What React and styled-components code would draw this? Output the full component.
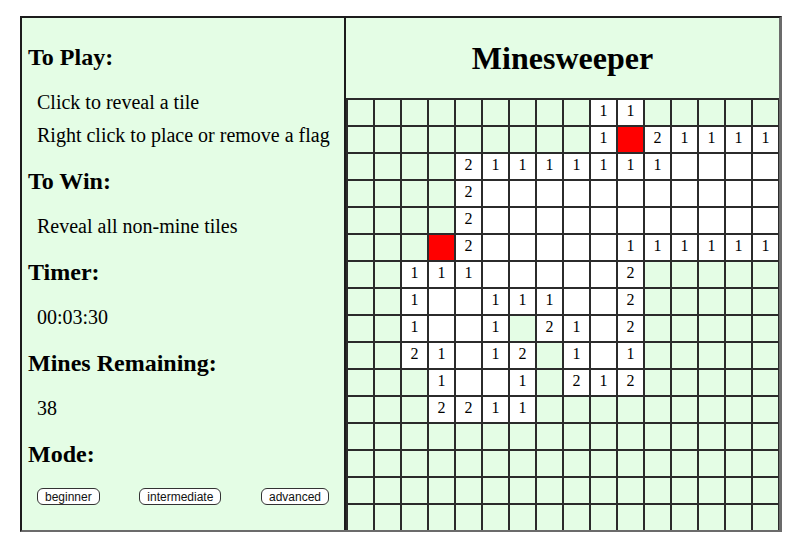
import React from 'react';
import styled, { createGlobalStyle } from 'styled-components';

const GlobalStyle = createGlobalStyle`
  body {
    margin: 0;
    background: #ffffff;
    font-family: 'Liberation Serif', 'Times New Roman', serif;
    color: #000;
  }
`;

const PALE = '#e4fde5';
const LINE = '#2b2b2b';

// board layout: '.' hidden, ' ' revealed empty, '*' mine, digits = count
const BOARD = [
  '.........11.....',
  '.........1*21111',
  '....21111111    ',
  '....2           ',
  '....2           ',
  '...*2     111111',
  '..111     2.....',
  '..1  111  2.....',
  '..1  1.21 2.....',
  '..21 12.1 1.....',
  '...1  1.212.....',
  '...2211.........',
  '................',
  '................',
  '................',
  '................',
];

const Page = styled.div`
  padding: 16px 20px;
`;

const Frame = styled.div`
  display: inline-flex;
  align-items: stretch;
  border-top: 2px solid #1c1c1c;
  border-left: 2px solid #1c1c1c;
  border-bottom: 2px solid #6b6b6b;
  border-right: 3px solid #6b6b6b;
`;

const InfoPanel = styled.div`
  width: 324px;
  box-sizing: border-box;
  background: ${PALE};
  border-right: 2px solid #1c1c1c;
  padding: 26px 0 0 6px;
  display: flex;
  flex-direction: column;
  gap: 21px;
`;

const Heading = styled.h3`
  margin: 0;
  font-size: 24px;
  line-height: 26px;
  font-weight: bold;
`;

const ItemList = styled.div`
  display: flex;
  flex-direction: column;
  gap: 10px;
  padding-left: 9px;
`;

const Item = styled.div`
  font-size: 20px;
  line-height: 23px;
`;

const ModeRow = styled.div`
  display: flex;
  justify-content: space-between;
  padding: 0 15px 0 9px;
`;

const ModeButton = styled.button`
  font-family: 'Liberation Sans', Arial, sans-serif;
  font-size: 12px;
  line-height: 14px;
  padding: 1px 7px 0;
  background: #fff;
  color: #111;
  border: 1px solid #333;
  border-radius: 6px;
  cursor: pointer;
`;

const GamePanel = styled.div`
  display: flex;
  flex-direction: column;
`;

const TitleBar = styled.div`
  height: 80px;
  background: ${PALE};
  display: flex;
  align-items: center;
  justify-content: center;
`;

const Title = styled.h1`
  margin: 0;
  font-size: 32px;
  line-height: 37px;
  font-weight: bold;
  padding-top: 1px;
`;

const Board = styled.div`
  display: grid;
  grid-template-columns: repeat(16, 25px);
  grid-auto-rows: 25px;
  gap: 2px;
  padding: 2px 1px 0 2px;
  background: ${LINE};
`;

const Tile = styled.div`
  background: ${({ $state }) =>
    $state === 'mine' ? '#ff0000' : $state === 'hidden' ? PALE : '#ffffff'};
  font-size: 16px;
  line-height: 18px;
  padding-top: 2px;
  text-align: center;
  user-select: none;
`;

const tileState = (ch) => {
  if (ch === '.') return 'hidden';
  if (ch === '*') return 'mine';
  return 'open';
};

const App = () => {
  return (
    <Page>
      <GlobalStyle />
      <Frame>
        <InfoPanel>
          <Heading>To Play:</Heading>
          <ItemList>
            <Item>Click to reveal a tile</Item>
            <Item>Right click to place or remove a flag</Item>
          </ItemList>
          <Heading>To Win:</Heading>
          <ItemList>
            <Item>Reveal all non-mine tiles</Item>
          </ItemList>
          <Heading>Timer:</Heading>
          <ItemList>
            <Item>00:03:30</Item>
          </ItemList>
          <Heading>Mines Remaining:</Heading>
          <ItemList>
            <Item>38</Item>
          </ItemList>
          <Heading>Mode:</Heading>
          <ModeRow>
            <ModeButton>beginner</ModeButton>
            <ModeButton>intermediate</ModeButton>
            <ModeButton>advanced</ModeButton>
          </ModeRow>
        </InfoPanel>
        <GamePanel>
          <TitleBar>
            <Title>Minesweeper</Title>
          </TitleBar>
          <Board>
            {BOARD.map((row, r) =>
              row.split('').map((ch, c) => (
                <Tile key={`${r}-${c}`} $state={tileState(ch)}>
                  {/[0-9]/.test(ch) ? ch : ''}
                </Tile>
              ))
            )}
          </Board>
        </GamePanel>
      </Frame>
    </Page>
  );
};

export default App;
